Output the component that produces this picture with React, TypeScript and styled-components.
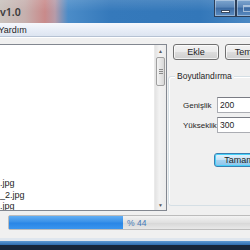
import React from "react";
import styled, { createGlobalStyle } from "styled-components";

const Global = createGlobalStyle`
  html, body { margin: 0; padding: 0; width: 250px; height: 250px; overflow: hidden; background: #1b2a3e; }
  #root { width: 250px; height: 250px; }
  * { box-sizing: border-box; }
`;

const Win = styled.div`
  width: 250px;
  height: 250px;
  display: flex;
  flex-direction: column;
  font-family: "Liberation Sans", "Noto Sans", sans-serif;
  font-size: 8.5px;
  color: #1e1e1e;
  overflow: hidden;
`;

const TitleBar = styled.div`
  height: 23px;
  flex: none;
  display: flex;
  align-items: flex-start;
  justify-content: space-between;
  background:
    linear-gradient(180deg, rgba(255,255,255,0.12) 0%, rgba(255,255,255,0) 50%),
    linear-gradient(90deg, #c9c2bd 0px, #c6b0ae 25px, #c98a8a 45px, #b79ba8 55px, #4b8cc8 68px, #3579bb 110px, #3377b9 200px, #4a88c4 250px);
`;

const TitleText = styled.span`
  font-family: "Noto Sans", "Liberation Sans", sans-serif;
  font-size: 10.5px;
  font-weight: 600;
  color: #3a3a3a;
  margin-left: 0px;
  margin-top: 5px;
`;

const CaptionGroup = styled.div`
  display: flex;
  margin-right: -8px;
`;

const CaptionButton = styled.div`
  width: 22px;
  height: 17px;
  border: 1px solid #2c3e58;
  border-top: none;
  background: linear-gradient(180deg, #7ea5cf 0%, #5a86b8 45%, #3c6aa2 50%, #5a8cc2 100%);
  display: flex;
  align-items: center;
  justify-content: center;
  box-shadow: inset 0 0 0 1px rgba(255,255,255,0.35);
`;

const MinGlyph = styled.div`
  width: 9px;
  height: 3px;
  margin-top: 6px;
  background: #fff;
  border: 1px solid #3a4a60;
`;

const MaxGlyph = styled.div`
  width: 9px;
  height: 7px;
  border: 1px solid #dfe8f2;
  border-top-width: 2px;
  opacity: 0.6;
`;

const MenuBar = styled.div`
  height: 14px;
  flex: none;
  background: linear-gradient(180deg, #f6f8fc 0%, #e6ecf6 60%, #dde5f1 100%);
  border-bottom: 1px solid #b6c2d3;
  display: flex;
  align-items: center;
`;

const MenuItem = styled.span`
  margin-left: -1.5px;
  font-size: 9px;
  color: #1e1e1e;
`;

const Body = styled.div`
  flex: 1;
  background: #f0f0f0;
  display: flex;
  flex-direction: column;
  border-top: 1px solid #fff;
`;

const Main = styled.div`
  display: flex;
  padding-top: 6px;
`;

const ListBox = styled.div`
  width: 171px;
  flex: none;
  height: 167px;
  margin-left: -4px;
  background: #fff;
  border: 1px solid #828790;
  display: flex;
  overflow: hidden;
`;

const ListItems = styled.div`
  flex: 1;
  display: flex;
  flex-direction: column;
  justify-content: flex-end;
  margin-bottom: -2.5px;
`;

const Item = styled.div`
  height: 11.5px;
  line-height: 11.5px;
  white-space: nowrap;
  margin-left: -39px;
  font-size: 9px;
`;

const ScrollBar = styled.div`
  width: 12px;
  flex: none;
  display: flex;
  flex-direction: column;
  background: linear-gradient(90deg, #e3e3e3, #f2f2f2 40%, #ececec);
  border-left: 1px solid #eaeaea;
`;

const Arrow = styled.div`
  height: 11px;
  display: flex;
  align-items: center;
  justify-content: center;
  color: #5a5a5a;
  font-size: 5px;
`;

const Thumb = styled.div`
  height: 29px;
  margin: 1px 1px 0 1px;
  border: 1px solid #a0a0a0;
  border-radius: 2px;
  background: linear-gradient(90deg, #f4f4f4, #e6e6e6 50%, #d8d8d8);
  display: flex;
  align-items: center;
  justify-content: center;
`;

const Grip = styled.div`
  width: 4px;
  height: 5px;
  background: repeating-linear-gradient(180deg, #8a8a8a 0 1px, transparent 1px 2px);
`;

const Track = styled.div`
  flex: 1;
`;

const Side = styled.div`
  flex: 1;
  display: flex;
  flex-direction: column;
  padding-left: 6px;
`;

const ButtonRow = styled.div`
  display: flex;
  gap: 6px;
  margin-right: -30px;
`;

const Button = styled.div<{ $w: number; $focused?: boolean }>`
  width: ${(p) => p.$w}px;
  height: ${(p) => (p.$focused ? 14 : 16)}px;
  border: 1px solid ${(p) => (p.$focused ? "#3c7fb1" : "#707070")};
  border-radius: 3px;
  background: ${(p) =>
    p.$focused
      ? "linear-gradient(180deg, #e8f4fc 0%, #c4e3f7 48%, #a5d3f1 52%, #8cc3ea 100%)"
      : "linear-gradient(180deg, #f2f2f2 0%, #ebebeb 48%, #dddddd 52%, #cfcfcf 100%)"};
  box-shadow: inset 0 0 0 1px ${(p) => (p.$focused ? "#48d1f8" : "rgba(255,255,255,0.7)")};
  display: flex;
  align-items: center;
  justify-content: center;
  font-size: 9px;
  color: #1e1e1e;
`;

const Group = styled.div`
  margin-top: 16px;
  margin-left: -5px;
  margin-right: -10px;
  height: 130px;
  border: 1px solid #d5dfe5;
  border-radius: 3px;
  box-shadow: inset 1px 1px 0 #fff;
  display: flex;
  flex-direction: column;
  padding-left: 14px;
`;

const Legend = styled.span`
  margin-top: -7px;
  margin-left: -8px;
  padding: 0 2px;
  background: #f0f0f0;
  align-self: flex-start;
  font-size: 8.5px;
  line-height: 12px;
`;

const Fields = styled.div`
  margin-top: 15px;
  display: grid;
  grid-template-columns: 34px 40px;
  row-gap: 4px;
  align-items: center;
`;

const Label = styled.span`
  font-size: 8px;
  white-space: nowrap;
`;

const Input = styled.div`
  height: 16px;
  border: 1px solid #abadb3;
  border-top-color: #7a7c84;
  background: #fff;
  padding-left: 2px;
  display: flex;
  align-items: center;
  font-size: 8.5px;
`;

const OkRow = styled.div`
  margin-top: 20px;
  padding-left: 31px;
`;

const Progress = styled.div`
  margin-top: 4px;
  margin-left: 8px;
  margin-right: -10px;
  height: 15px;
  border: 1px solid #bcbcbc;
  border-radius: 2px;
  background: linear-gradient(180deg, #f3f3f3, #e0e0e0 50%, #d6d6d6 51%, #e8e8e8);
  position: relative;
  display: flex;
  align-items: center;
`;

const Fill = styled.div`
  height: 100%;
  background: linear-gradient(180deg, #62aef4 0%, #3a91e8 45%, #2a86e6 55%, #3a95ee 100%);
`;

const ProgressText = styled.span`
  position: absolute;
  left: 118px;
  top: 2px;
  font-size: 8.5px;
  color: #4478b8;
`;

const BottomFrame = styled.div`
  margin-top: auto;
  height: 12px;
  display: flex;
  flex-direction: column;
`;

const FrameLight = styled.div`
  height: 3px;
  background: #dfe6ee;
`;

const FrameBlue = styled.div`
  height: 4px;
  background: linear-gradient(180deg, #5d9ad4, #2d6cae);
`;

const Taskbar = styled.div`
  flex: 1;
  background: #16263a;
`;

export default function App() {
  const pct = 44;
  return (
    <>
      <Global />
      <Win>
        <TitleBar>
          <TitleText>v1.0</TitleText>
          <CaptionGroup>
            <CaptionButton>
              <MinGlyph />
            </CaptionButton>
            <CaptionButton>
              <MaxGlyph />
            </CaptionButton>
          </CaptionGroup>
        </TitleBar>
        <MenuBar>
          <MenuItem>Yardım</MenuItem>
        </MenuBar>
        <Body>
          <Main>
            <ListBox>
              <ListItems>
                <Item>IMG_0001.jpg</Item>
                <Item>IMG_0001_2.jpg</Item>
                <Item>IMG_0003.jpg</Item>
              </ListItems>
              <ScrollBar>
                <Arrow>▲</Arrow>
                <Thumb>
                  <Grip />
                </Thumb>
                <Track />
                <Arrow>▼</Arrow>
              </ScrollBar>
            </ListBox>
            <Side>
              <ButtonRow>
                <Button $w={46}>Ekle</Button>
                <Button $w={50}>Temizle</Button>
              </ButtonRow>
              <Group>
                <Legend>Boyutlandırma</Legend>
                <Fields>
                  <Label>Genişlik</Label>
                  <Input>200</Input>
                  <Label>Yükseklik</Label>
                  <Input>300</Input>
                </Fields>
                <OkRow>
                  <Button $w={50} $focused>
                    Tamam
                  </Button>
                </OkRow>
              </Group>
            </Side>
          </Main>
          <Progress>
            <Fill style={{ width: `${pct * 2.6}px` }} />
            <ProgressText>% {pct}</ProgressText>
          </Progress>
          <BottomFrame>
            <FrameLight />
            <FrameBlue />
            <Taskbar />
          </BottomFrame>
        </Body>
      </Win>
    </>
  );
}
